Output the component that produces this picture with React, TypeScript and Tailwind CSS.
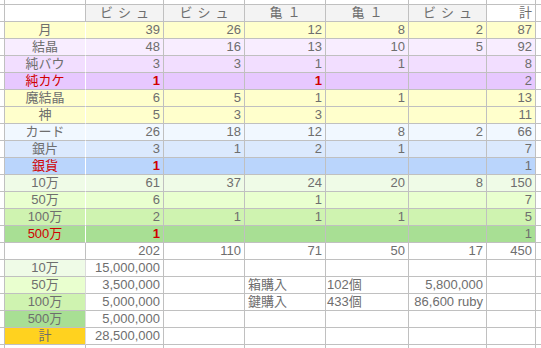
import React from "react";

type Row = {
  label: string;
  bg: string;
  red?: boolean;
  cells: (string | number)[];
};

const upper: Row[] = [
  { label: "月", bg: "bg-[#ffffcc]", cells: [39, 26, 12, 8, 2, 87] },
  { label: "結晶", bg: "bg-[#f8edff]", cells: [48, 16, 13, 10, 5, 92] },
  { label: "純バウ", bg: "bg-[#f2deff]", cells: [3, 3, 1, 1, "", 8] },
  { label: "純カケ", bg: "bg-[#e7c8ff]", red: true, cells: ["1", "", "1", "", "", 2] },
  { label: "魔結晶", bg: "bg-[#ffffcc]", cells: [6, 5, 1, 1, "", 13] },
  { label: "神", bg: "bg-[#ffffcc]", cells: [5, 3, 3, "", "", 11] },
  { label: "カード", bg: "bg-[#f1f8ff]", cells: [26, 18, 12, 8, 2, 66] },
  { label: "銀片", bg: "bg-[#dbe9fd]", cells: [3, 1, 2, 1, "", 7] },
  { label: "銀貨", bg: "bg-[#bad5fc]", red: true, cells: ["1", "", "", "", "", 1] },
  { label: "10万", bg: "bg-[#effbe7]", cells: [61, 37, 24, 20, 8, 150] },
  { label: "50万", bg: "bg-[#e9ffcf]", cells: [6, "", 1, "", "", 7] },
  { label: "100万", bg: "bg-[#cff3b0]", cells: [2, 1, 1, 1, "", 5] },
  { label: "500万", bg: "bg-[#a8df94]", red: true, cells: ["1", "", "", "", "", 1] },
];

const money = [
  { label: "10万", bg: "bg-[#effbe7]", amount: "15,000,000", extra: null },
  { label: "50万", bg: "bg-[#e9ffcf]", amount: "3,500,000", extra: ["箱購入", "102個", "5,800,000"] },
  { label: "100万", bg: "bg-[#cff3b0]", amount: "5,000,000", extra: ["鍵購入", "433個", "86,600 ruby"] },
  { label: "500万", bg: "bg-[#a8df94]", amount: "5,000,000", extra: null },
  { label: "計", bg: "bg-[#ffd21f]", amount: "28,500,000", extra: null },
];

// widths include the 1px right border
const widths = ["w-[78px]", "w-[81px]", "w-[81px]", "w-[83px]", "w-[78px]", "w-[49px]"];

const line = "border-r border-b border-[#c0c0c0]";

function Stub() {
  return <div className={`w-[5px] shrink-0 bg-white ${line}`} />;
}

function Rest() {
  return <div className="flex-1 border-b border-[#c0c0c0] bg-white" />;
}

export default function App() {
  return (
    <div className="h-[348px] w-[541px] overflow-hidden bg-white font-['Liberation_Sans','Noto_Sans_CJK_JP',sans-serif] text-[13px] leading-[16px] text-[#6e6e6e]">
      {/* partial row above header */}
      <div className="flex h-[5px]">
        <Stub />
        <div className={`w-[81px] shrink-0 ${line}`} />
        {widths.map((w, i) => (
          <div key={i} className={`${w} shrink-0 ${line}`} />
        ))}
        <Rest />
      </div>

      {/* header */}
      <div className="flex h-[17px]">
        <Stub />
        <div className={`w-[81px] shrink-0 bg-white ${line}`} />
        {["ビシュ", "ビシュ", "亀１", "亀１", "ビシュ"].map((h, i) => (
          <div
            key={i}
            className={`${widths[i]} shrink-0 bg-[#f3f3f3] pl-[5px] text-center tracking-[5px] ${line}`}
          >
            {h}
          </div>
        ))}
        <div className={`${widths[5]} shrink-0 bg-white pr-[3px] text-right ${line}`}>計</div>
        <Rest />
      </div>

      {upper.map((r) => (
        <div key={r.label + r.bg} className="flex h-[17px]">
          <Stub />
          <div
            className={`w-[81px] shrink-0 border-b border-r border-b-[#c0c0c0] border-r-white text-center ${r.bg} ${
              r.red ? "text-[#d00000]" : ""
            }`}
          >
            {r.label}
          </div>
          {r.cells.map((c, i) => (
            <div
              key={i}
              className={`${widths[i]} shrink-0 pr-[3px] text-right ${r.bg} ${line} ${
                typeof c === "string" && c !== "" ? "font-bold text-[#d00000]" : ""
              }`}
            >
              {c}
            </div>
          ))}
          <Rest />
        </div>
      ))}

      {/* totals */}
      <div className="flex h-[17px]">
        <Stub />
        <div className={`w-[81px] shrink-0 bg-white ${line}`} />
        {[202, 110, 71, 50, 17, 450].map((n, i) => (
          <div key={i} className={`${widths[i]} shrink-0 bg-white pr-[3px] text-right ${line}`}>
            {n}
          </div>
        ))}
        <Rest />
      </div>

      {money.map((m) => (
        <div key={m.label} className="flex h-[17px]">
          <Stub />
          <div className={`w-[81px] shrink-0 text-center ${m.bg} border-b border-r border-b-[#c0c0c0] border-r-[#dcdcdc]`}>
            {m.label}
          </div>
          <div className={`${widths[0]} shrink-0 pr-[3px] text-right ${line}`}>{m.amount}</div>
          <div className={`${widths[1]} shrink-0 ${line}`} />
          <div className={`${widths[2]} shrink-0 pl-[3px] ${line}`}>{m.extra ? m.extra[0] : ""}</div>
          <div className={`${widths[3]} shrink-0 pl-[1px] ${line}`}>{m.extra ? m.extra[1] : ""}</div>
          <div className={`${widths[4]} shrink-0 pr-[3px] text-right ${line}`}>{m.extra ? m.extra[2] : ""}</div>
          <div className={`${widths[5]} shrink-0 ${line}`} />
          <Rest />
        </div>
      ))}

      {/* partial row at the bottom */}
      <div className="flex h-[3px]">
        <div className="w-[5px] shrink-0 border-r border-[#c0c0c0]" />
        <div className="w-[81px] shrink-0 border-r border-[#c0c0c0]" />
        {widths.map((w, i) => (
          <div key={i} className={`${w} shrink-0 border-r border-[#c0c0c0]`} />
        ))}
      </div>
    </div>
  );
}
